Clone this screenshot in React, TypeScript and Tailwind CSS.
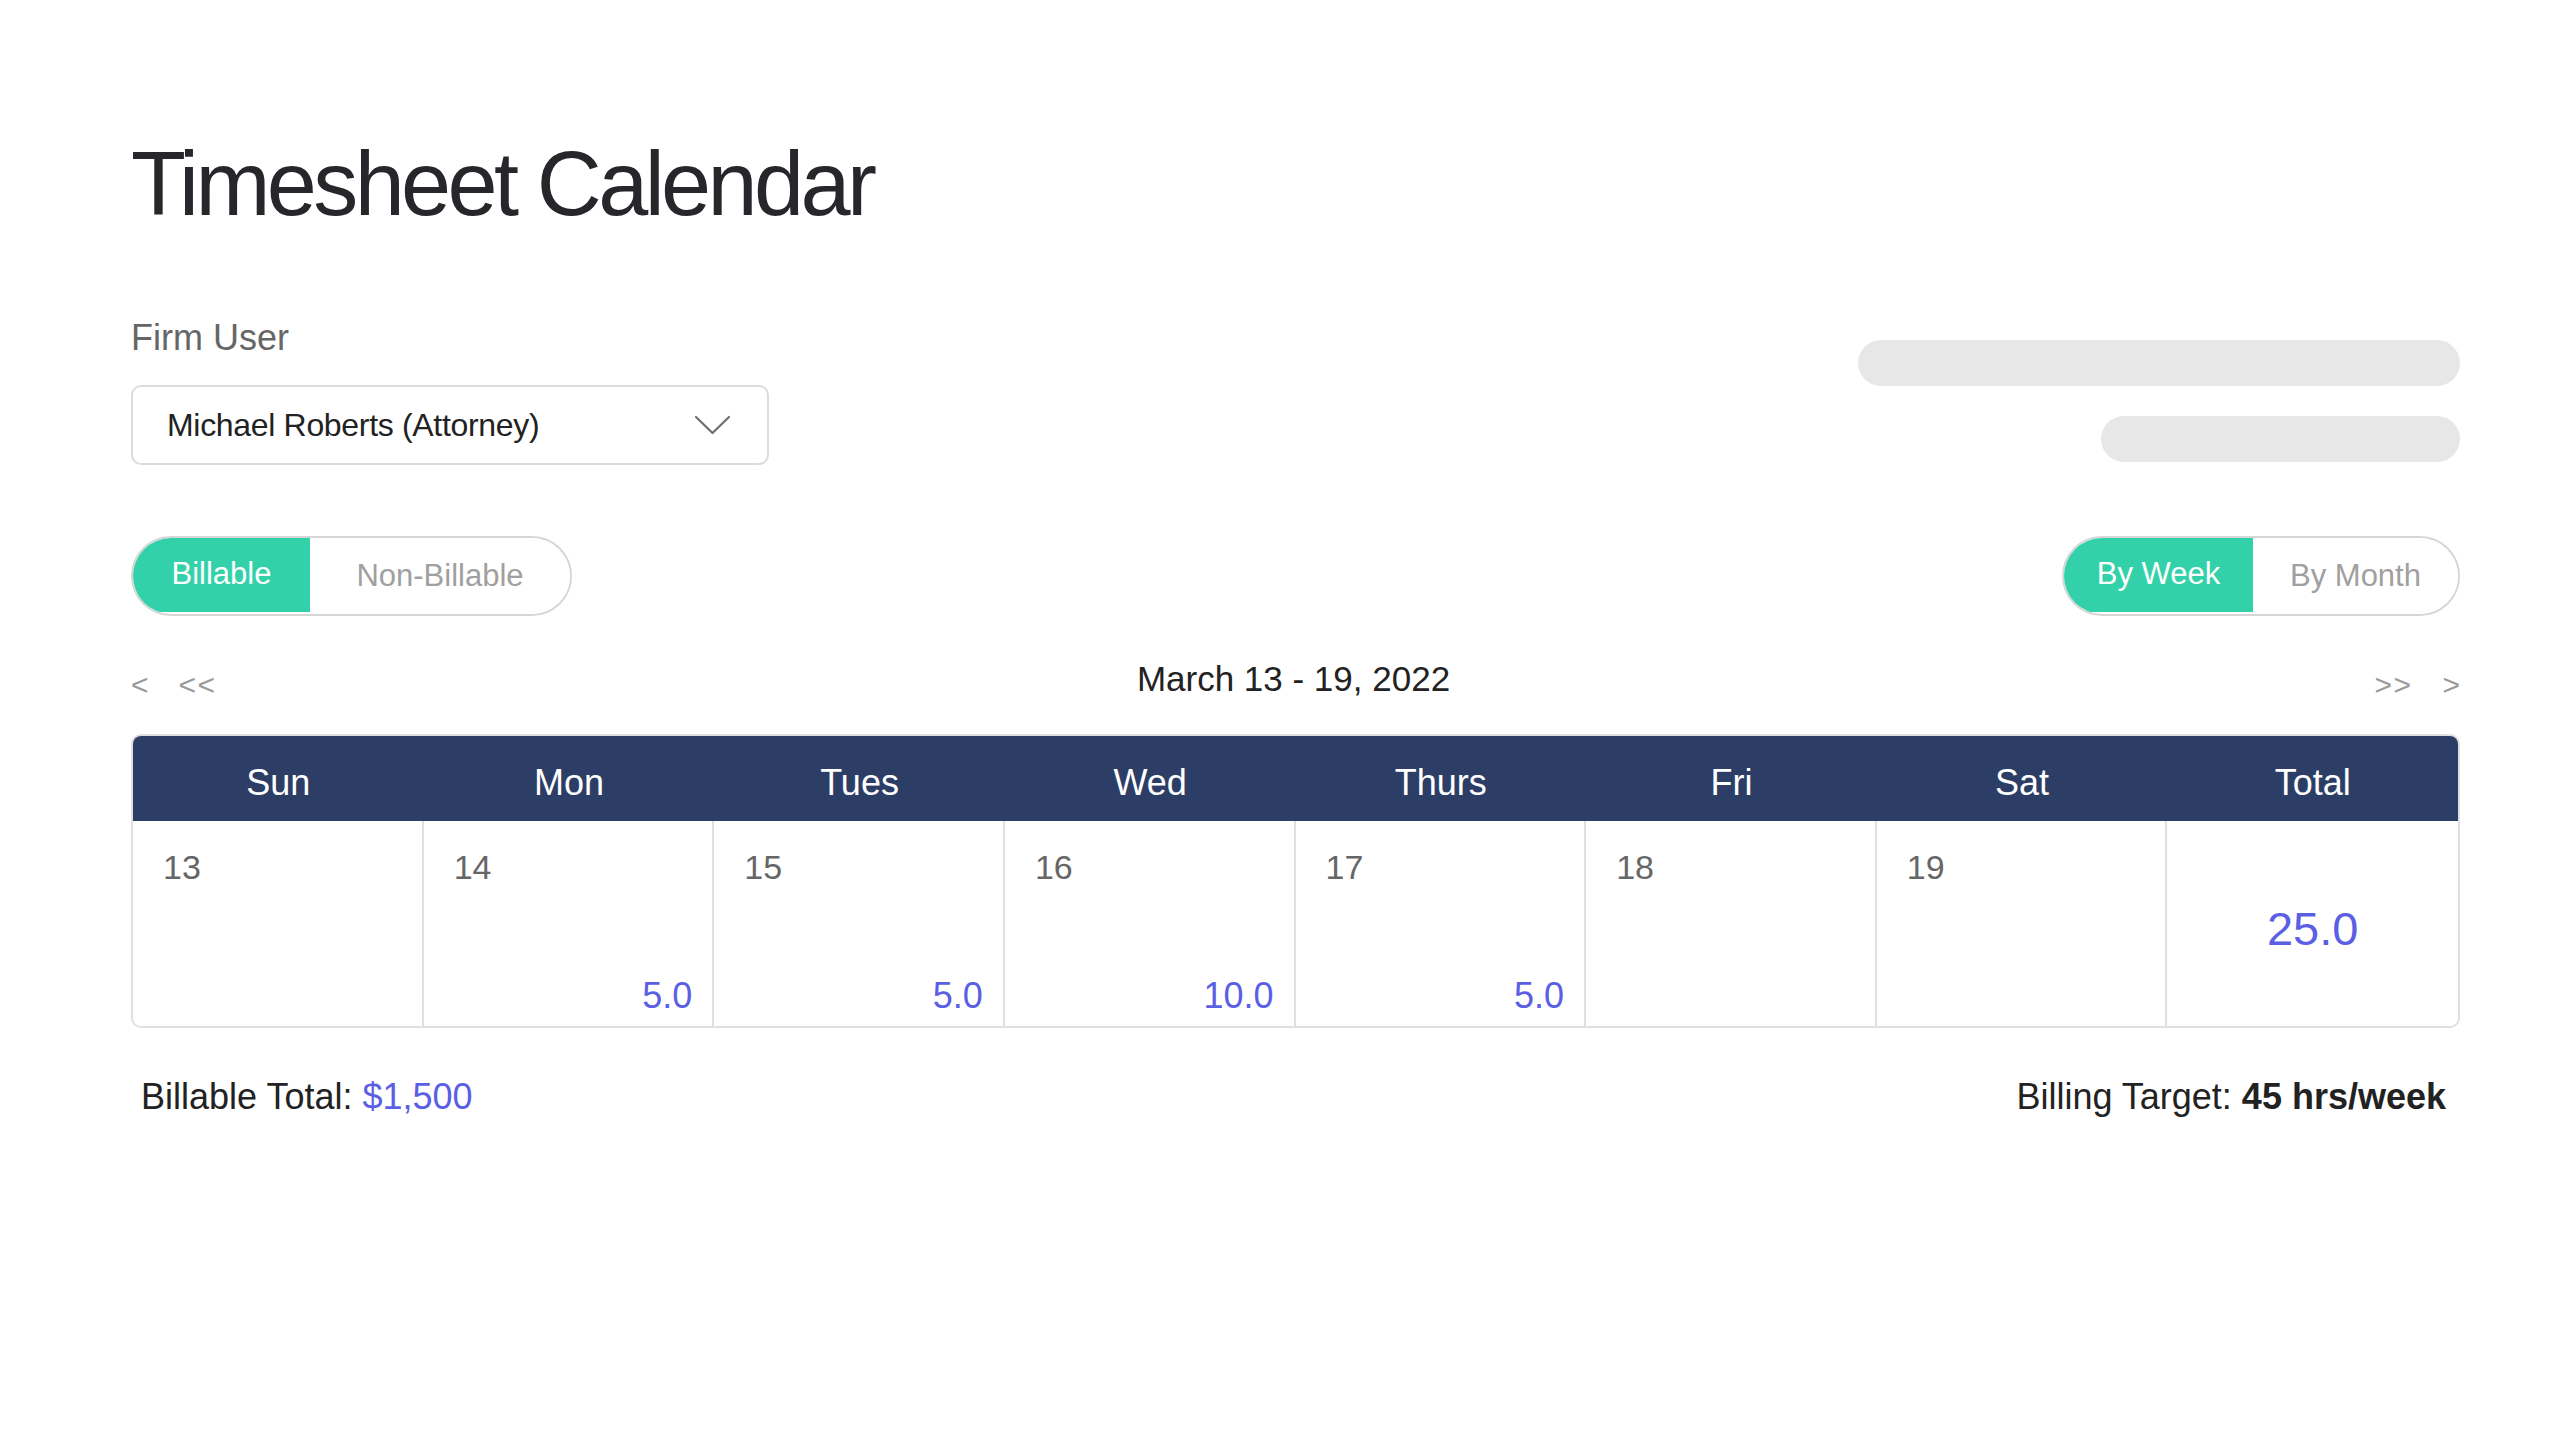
import React, { useState } from 'react';

// 日历的一周数据
const days = [
  { name: 'Sun', date: 13, hours: null },
  { name: 'Mon', date: 14, hours: '5.0' },
  { name: 'Tues', date: 15, hours: '5.0' },
  { name: 'Wed', date: 16, hours: '10.0' },
  { name: 'Thurs', date: 17, hours: '5.0' },
  { name: 'Fri', date: 18, hours: null },
  { name: 'Sat', date: 19, hours: null },
];

const font = { fontFamily: '"Liberation Sans", Arial, sans-serif' };

const ChevronDown = () => (
  <svg width="37" height="22" viewBox="0 0 37 22" fill="none">
    <polyline points="2,3 18.5,19 35,3" stroke="#6f6f6f" strokeWidth="2.2" strokeLinecap="round" strokeLinejoin="round" />
  </svg>
);

interface SegmentedProps {
  options: string[];
  value: string;
  onChange: (v: string) => void;
  widths: string[];
}

const Segmented: React.FC<SegmentedProps> = ({ options, value, onChange, widths }) => (
  <div className="flex h-[80px] rounded-full border-2 border-[#d6d6d6] overflow-hidden">
    {options.map((opt, i) => (
      <button
        key={opt}
        onClick={() => onChange(opt)}
        className={`${widths[i]} h-full flex items-center justify-center text-[31px] ${
          value === opt ? 'bg-[#33d1a9] text-white -m-[2px] h-[80px]' : 'bg-white text-[#a0a0a0]'
        }`}
      >
        {opt}
      </button>
    ))}
  </div>
);

export default function App() {
  const [billing, setBilling] = useState('Billable');
  const [range, setRange] = useState('By Week');

  return (
    <div className="min-h-[1440px] w-full bg-white text-[#222]" style={font}>
      <div className="pl-[131px] pt-[139px] w-[2460px]">
        {/* 标题 */}
        <h1 className="text-[90px] leading-none tracking-[-0.04em] text-[#26262b]">Timesheet Calendar</h1>

        {/* 用户选择 + 占位条 */}
        <div className="flex justify-between mt-[91px]">
          <div>
            <div className="text-[36px] leading-none text-[#666]">Firm User</div>
            <div className="mt-[29px] w-[638px] h-[80px] border-2 border-[#dcdcdc] rounded-[10px] flex items-center justify-between pl-[34px] pr-[36px]">
              <span className="text-[32px] tracking-[-0.01em] text-[#222]">Michael Roberts (Attorney)</span>
              <ChevronDown />
            </div>
          </div>
          <div className="flex flex-col items-end gap-[30px] pt-[20px]">
            <div className="w-[602px] h-[46px] rounded-full bg-[#e7e7e7]" />
            <div className="w-[359px] h-[46px] rounded-full bg-[#e7e7e7]" />
          </div>
        </div>

        {/* 切换按钮 */}
        <div className="flex justify-between mt-[71px]">
          <Segmented
            options={['Billable', 'Non-Billable']}
            value={billing}
            onChange={setBilling}
            widths={['w-[181px]', 'w-[260px]']}
          />
          <Segmented
            options={['By Week', 'By Month']}
            value={range}
            onChange={setRange}
            widths={['w-[193px]', 'w-[205px]']}
          />
        </div>

        {/* 日期导航 */}
        <div className="flex items-center justify-between mt-[44px] h-[36px]">
          <div className="flex gap-[30px] text-[30px] text-[#9a9a9a] pt-[13px]">
            <span>&lt;</span>
            <span className="tracking-[0.05em]">&lt;&lt;</span>
          </div>
          <div className="text-[35px] leading-none text-[#222] pr-[4px]">March 13 - 19, 2022</div>
          <div className="flex gap-[30px] text-[30px] text-[#9a9a9a] pt-[13px]">
            <span className="tracking-[0.05em]">&gt;&gt;</span>
            <span>&gt;</span>
          </div>
        </div>

        {/* 日历表格 */}
        <div className="mt-[38px] rounded-[10px] border-2 border-[#e0e0e0] overflow-hidden">
          <div className="grid grid-cols-8 h-[85px] bg-[#2d3e66] text-white text-[36px]">
            {[...days.map((d) => d.name), 'Total'].map((n) => (
              <div key={n} className="flex items-center justify-center pt-[8px]">{n}</div>
            ))}
          </div>
          <div className="grid grid-cols-8 h-[205px]">
            {days.map((d) => (
              <div key={d.date} className="border-r-2 border-[#e0e0e0] flex flex-col justify-between pl-[30px] pr-[20px] pt-[29px] pb-[12px]">
                <span className="text-[34px] leading-none text-[#666]">{d.date}</span>
                <span className="text-[36px] leading-none text-right text-[#5b5fe4]">{d.hours ?? ''}</span>
              </div>
            ))}
            <div className="flex items-center justify-center pt-[12px] text-[47px] text-[#5b5fe4]">25.0</div>
          </div>
        </div>

        {/* 汇总 */}
        <div className="flex justify-between mt-[51px] pl-[10px] pr-[14px] text-[36px] leading-none text-[#222]">
          <div>
            Billable Total: <span className="text-[#5b5fe4]">$1,500</span>
          </div>
          <div>
            Billing Target: <span className="font-bold">45 hrs/week</span>
          </div>
        </div>
      </div>
    </div>
  );
}
